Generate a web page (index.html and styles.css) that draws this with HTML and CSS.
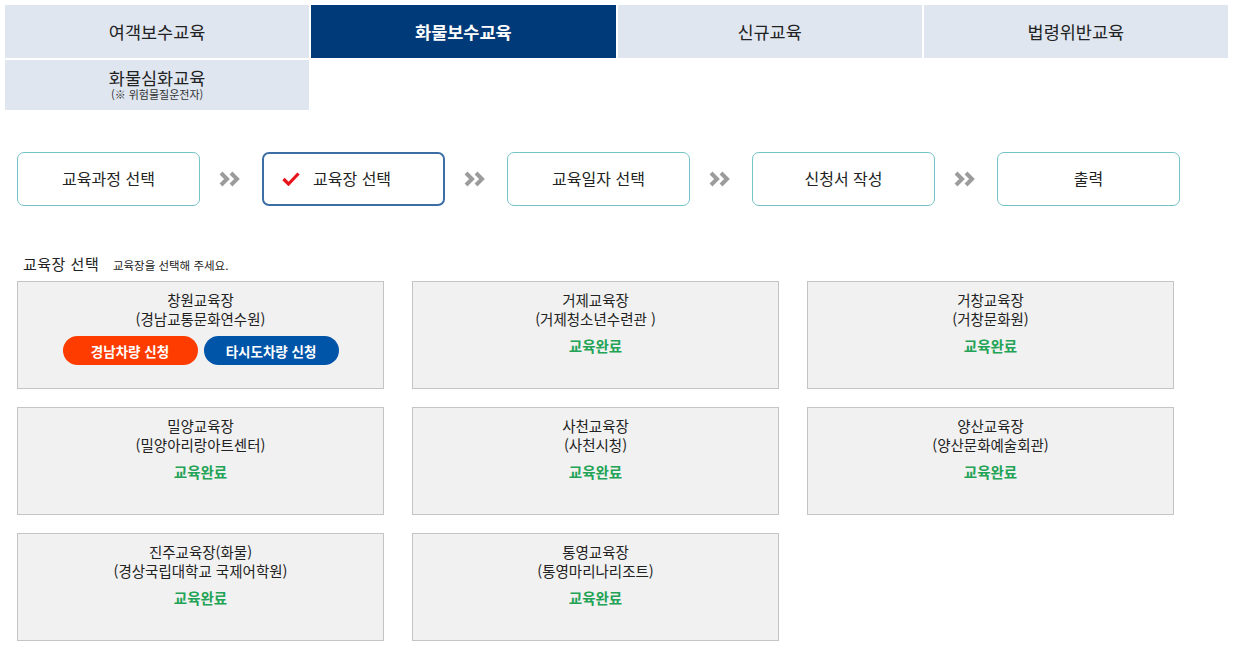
FILE: index.html
```html
<!DOCTYPE html>
<html lang="ko">
<head>
<meta charset="utf-8">
<title>교육장 선택</title>
<link rel="stylesheet" href="styles.css">
</head>
<body>
<nav class="tabs">
  <a class="tab">여객보수교육</a>
  <a class="tab active">화물보수교육</a>
  <a class="tab">신규교육</a>
  <a class="tab">법령위반교육</a>
  <a class="tab tab-sub"><span class="tab-main">화물심화교육</span><span class="tab-note">(※ 위험물질운전자)</span></a>
</nav>

<ol class="steps">
  <li class="step">교육과정 선택</li>
  <li class="arrow"><svg width="22" height="16" viewBox="0 0 22 16"><path d="M2 2 L8 8 L2 14" fill="none" stroke="#9c9c9c" stroke-width="4"/><path d="M12 2 L18 8 L12 14" fill="none" stroke="#9c9c9c" stroke-width="4"/></svg></li>
  <li class="step current"><svg class="check" width="18" height="14" viewBox="0 0 18 14"><path d="M1.5 7 L6.5 12 L16.5 1.5" fill="none" stroke="#e8141c" stroke-width="3.2"/></svg>교육장 선택</li>
  <li class="arrow"><svg width="22" height="16" viewBox="0 0 22 16"><path d="M2 2 L8 8 L2 14" fill="none" stroke="#9c9c9c" stroke-width="4"/><path d="M12 2 L18 8 L12 14" fill="none" stroke="#9c9c9c" stroke-width="4"/></svg></li>
  <li class="step">교육일자 선택</li>
  <li class="arrow"><svg width="22" height="16" viewBox="0 0 22 16"><path d="M2 2 L8 8 L2 14" fill="none" stroke="#9c9c9c" stroke-width="4"/><path d="M12 2 L18 8 L12 14" fill="none" stroke="#9c9c9c" stroke-width="4"/></svg></li>
  <li class="step">신청서 작성</li>
  <li class="arrow"><svg width="22" height="16" viewBox="0 0 22 16"><path d="M2 2 L8 8 L2 14" fill="none" stroke="#9c9c9c" stroke-width="4"/><path d="M12 2 L18 8 L12 14" fill="none" stroke="#9c9c9c" stroke-width="4"/></svg></li>
  <li class="step">출력</li>
</ol>

<h2 class="section-title">교육장 선택 <small>교육장을 선택해 주세요.</small></h2>

<div class="cards">
  <div class="card">
    <p class="name">창원교육장</p>
    <p class="name">(경남교통문화연수원)</p>
    <div class="btns">
      <button class="btn btn-orange">경남차량 신청</button>
      <button class="btn btn-blue">타시도차량 신청</button>
    </div>
  </div>
  <div class="card">
    <p class="name">거제교육장</p>
    <p class="name">(거제청소년수련관 )</p>
    <p class="done">교육완료</p>
  </div>
  <div class="card">
    <p class="name">거창교육장</p>
    <p class="name">(거창문화원)</p>
    <p class="done">교육완료</p>
  </div>
  <div class="card">
    <p class="name">밀양교육장</p>
    <p class="name">(밀양아리랑아트센터)</p>
    <p class="done">교육완료</p>
  </div>
  <div class="card">
    <p class="name">사천교육장</p>
    <p class="name">(사천시청)</p>
    <p class="done">교육완료</p>
  </div>
  <div class="card">
    <p class="name">양산교육장</p>
    <p class="name">(양산문화예술회관)</p>
    <p class="done">교육완료</p>
  </div>
  <div class="card">
    <p class="name">진주교육장(화물)</p>
    <p class="name">(경상국립대학교 국제어학원)</p>
    <p class="done">교육완료</p>
  </div>
  <div class="card">
    <p class="name">통영교육장</p>
    <p class="name">(통영마리나리조트)</p>
    <p class="done">교육완료</p>
  </div>
</div>
</body>
</html>
```

FILE: styles.css
```css
* { box-sizing: border-box; }
body {
  margin: 0;
  background: #fff;
  color: #222;
  font-family: "Noto Sans CJK KR", "Noto Sans", sans-serif;
}
.tabs {
  display: grid;
  grid-template-columns: repeat(4, 1fr);
  grid-template-rows: 53px 50px;
  gap: 2px;
  padding: 5px 5px 0;
  width: 1233px;
}
.tab {
  display: flex;
  flex-direction: column;
  align-items: center;
  justify-content: center;
  background: #dfe6f0;
  color: #222;
  font-size: 17.5px;
  line-height: 22px;
}
.tab.active {
  background: #003a78;
  color: #fff;
  font-weight: bold;
}
.tab-sub { padding-bottom: 2px; }
.tab-main { display: block; line-height: 20px; }
.tab-note {
  display: block;
  font-size: 11px;
  line-height: 12px;
  color: #333;
}
.steps {
  list-style: none;
  margin: 42px 0 0;
  padding: 0 0 0 17px;
  display: flex;
}
.step {
  width: 183px;
  height: 54px;
  border: 1px solid #74c3c6;
  border-radius: 7px;
  display: flex;
  align-items: center;
  justify-content: center;
  font-size: 16px;
  color: #222;
  padding-bottom: 2px;
}
.step.current {
  border: 2px solid #3c6ea5;
  justify-content: flex-start;
  padding-left: 18px;
}
.check { margin-right: 13px; margin-top: 1px; }
.arrow {
  width: 62px;
  display: flex;
  align-items: center;
  justify-content: center;
  padding-right: 2px;
}
.section-title {
  margin: 48px 0 0 23px;
  font-size: 15px;
  font-weight: normal;
  line-height: 20px;
  letter-spacing: 0.5px;
}
.section-title small {
  font-size: 11.5px;
  letter-spacing: 0;
  margin-left: 9px;
}
.cards {
  display: grid;
  grid-template-columns: repeat(3, 367px);
  grid-auto-rows: 108px;
  column-gap: 28px;
  row-gap: 18px;
  padding-left: 17px;
  margin-top: 6px;
}
.card {
  background: #f1f1f1;
  border: 1px solid #c4c4c4;
  padding-top: 8px;
  text-align: center;
}
.name {
  margin: 0;
  font-size: 14.5px;
  line-height: 19px;
  color: #222;
}
.done {
  margin: 8px 0 0;
  font-size: 14.5px;
  line-height: 19px;
  font-weight: bold;
  color: #22a356;
}
.btns {
  display: flex;
  justify-content: center;
  gap: 6px;
  margin-top: 8px;
}
.btn {
  width: 135px;
  height: 29px;
  border: 0;
  border-radius: 15px;
  color: #fff;
  font-family: inherit;
  font-size: 13.5px;
  font-weight: bold;
  padding: 0;
}
.btn-orange { background: #ff3c00; }
.btn-blue { background: #0055a8; }
```
